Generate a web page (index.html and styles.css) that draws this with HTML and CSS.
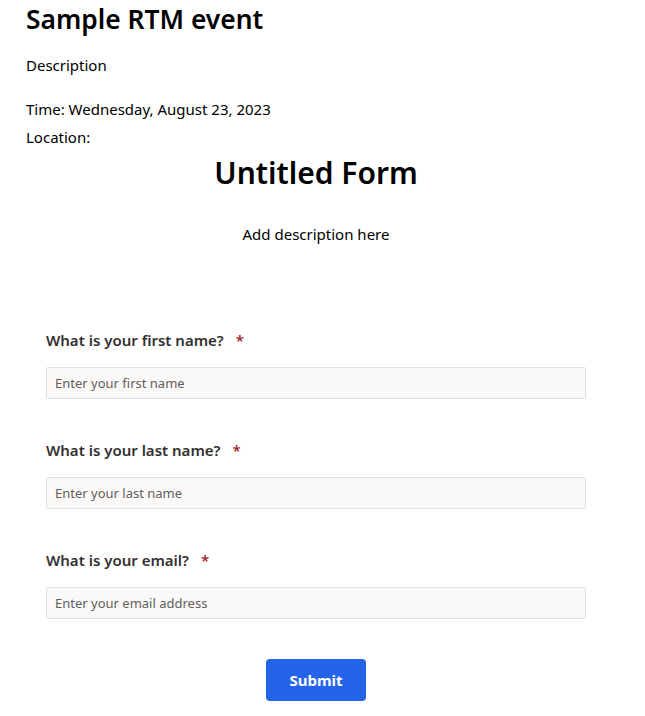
FILE: index.html
```html
<!DOCTYPE html>
<html>
<head>
<meta charset="utf-8">
<link rel="stylesheet" href="styles.css">
</head>
<body>
<div class="page">
  <h1 class="event-title">Sample RTM event</h1>
  <p class="event-desc">Description</p>
  <p class="event-line">Time: Wednesday, August 23, 2023</p>
  <p class="event-line">Location:</p>
  <div class="form">
    <h2 class="form-title">Untitled Form</h2>
    <p class="form-desc">Add description here</p>
    <div class="fields">
      <div class="field">
        <label class="label">What is your first name?<span class="star">*</span></label>
        <input class="input" type="text" placeholder="Enter your first name">
      </div>
      <div class="field">
        <label class="label">What is your last name?<span class="star">*</span></label>
        <input class="input" type="text" placeholder="Enter your last name">
      </div>
      <div class="field">
        <label class="label">What is your email?<span class="star">*</span></label>
        <input class="input" type="text" placeholder="Enter your email address">
      </div>
    </div>
    <div class="actions">
      <button class="submit">Submit</button>
    </div>
  </div>
</div>
</body>
</html>
```
FILE: styles.css
```css
html, body {
  margin: 0;
  padding: 0;
  background: #fff;
}
body {
  font-family: "Noto Sans", "Open Sans", sans-serif;
  color: #000;
}
.page {
  width: 580px;
  padding: 0 0 0 26px;
}
.event-title {
  margin: 0;
  padding-top: 1px;
  font-size: 26.4px;
  font-weight: 600;
  line-height: 36px;
}
.event-desc {
  margin: 16px 0 0;
  font-size: 15px;
  line-height: 24px;
}
.event-line {
  margin: 0;
  font-size: 15px;
  line-height: 28px;
}
.event-desc + .event-line {
  margin-top: 18px;
}
.form {
  display: flex;
  flex-direction: column;
}
.form-title {
  margin: 0;
  text-align: center;
  font-size: 30px;
  font-weight: 600;
  line-height: 44px;
}
.form-desc {
  margin: 27px 0 0;
  text-align: center;
  font-size: 15px;
  line-height: 24px;
}
.fields {
  display: flex;
  flex-direction: column;
  gap: 41px;
  padding: 84px 20px 0;
}
.field {
  display: flex;
  flex-direction: column;
  gap: 17px;
}
.label {
  font-size: 15px;
  font-weight: 600;
  color: #323130;
  line-height: 20px;
}
.star {
  color: #a4262c;
  margin-left: 12px;
}
.input {
  box-sizing: border-box;
  width: 540px;
  height: 32px;
  border: 1px solid #e1dfdd;
  border-radius: 2px;
  background: #faf9f8;
  padding: 0 8px;
  font-family: inherit;
  font-size: 13px;
  color: #323130;
}
.input::placeholder {
  color: #605e5c;
}
.actions {
  display: flex;
  justify-content: center;
  padding-top: 40px;
}
.submit {
  width: 100px;
  height: 42px;
  border: none;
  border-radius: 4px;
  background: #2563eb;
  color: #fff;
  font-family: inherit;
  font-size: 15px;
  font-weight: 700;
}
```
